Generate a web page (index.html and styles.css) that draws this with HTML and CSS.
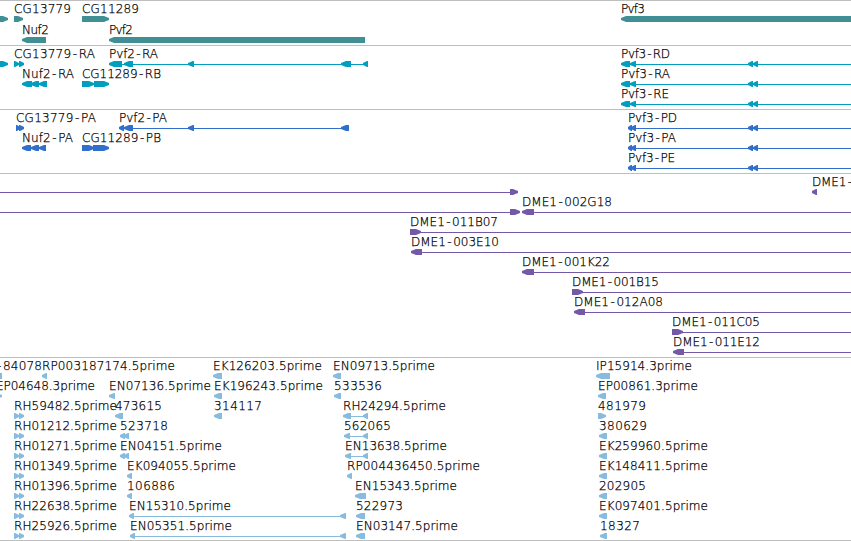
FILE: index.html
```html
<!DOCTYPE html>
<html lang="en">
<head>
  <meta charset="UTF-8">
  <meta name="viewport" content="width=device-width, initial-scale=1.0">
  <title>Genome Browser</title>
  <link rel="stylesheet" href="styles.css">
</head>
<body>
  <main class="tracks">
    <svg class="track genes" id="genes"></svg>
    <svg class="track transcripts" id="transcripts"></svg>
    <svg class="track proteins" id="proteins"></svg>
    <svg class="track clones" id="clones"></svg>
    <svg class="track insertions" id="insertions"></svg>
  </main>
  <script src="script.js"></script>
</body>
</html>
```

FILE: styles.css
```css
body {
  margin: 0;
  background: #fff;
  overflow: hidden;
}
.tracks {
  display: flex;
  flex-direction: column;
  border-bottom: 1px solid #bebebe;
}
.track {
  display: block;
  width: 100%;
  box-sizing: border-box;
  border-top: 1px solid #bebebe;
  overflow: hidden;
}
.track text {
  font-family: "DejaVu Sans", sans-serif;
  font-size: 12px;
  font-weight: 200;
  fill: #000;
  stroke: #000;
  stroke-width: 0.25px;
}
.genes {
  height: 45px;
  color: #3f8f94;
}
.transcripts {
  height: 64px;
  color: #009fc0;
}
.proteins {
  height: 64px;
  color: #306fcc;
}
.clones {
  height: 184px;
  color: #7559a9;
}
.insertions {
  height: 183px;
  color: #87bcde;
}
.feature polygon,
.feature rect {
  fill: currentColor;
}
```

FILE: script.js
```js
// Each feature: [row, strand, label, label start, label end, blocks, connector]
const tracks = {
  genes: [
    [0, '+', '', 0, 0, [[-10, 8]]],
    [0, '+', 'CG13779', 14, 71, [[14, 23]]],
    [0, '+', 'CG11289', 82, 139, [[82, 109]]],
    [0, '-', 'Pvf3', 621, 645, [[621, 900]]],
    [1, '-', 'Nuf2', 22, 49, [[22, 46]]],
    [1, '-', 'Pvf2', 109, 133, [[109, 365]]]
  ],
  transcripts: [
    [0, '+', '', 0, 0, [[-10, 8]]],
    [0, '+', 'CG13779-RA', 14, 95, [[14, 19], [19, 24]]],
    [0, '-', 'Pvf2-RA', 109, 158, [[109, 122], [124, 133], [188, 194], [341, 351], [363, 368]], [109, 368]],
    [0, '-', 'Pvf3-RD', 621, 670, [[621, 630], [630, 636], [748, 753], [753, 758]], [621, 900]],
    [1, '-', 'Nuf2-RA', 22, 74, [[22, 32], [31, 39], [39, 47]]],
    [1, '+', 'CG11289-RB', 82, 161, [[82, 94], [94, 109]]],
    [1, '-', 'Pvf3-RA', 621, 670, [[621, 630], [630, 636], [748, 753], [753, 758]], [621, 900]],
    [2, '-', 'Pvf3-RE', 621, 669, [[621, 630], [630, 636], [748, 753], [753, 758]], [621, 900]]
  ],
  proteins: [
    [0, '+', 'CG13779-PA', 16, 96, [[16, 20], [19, 24]]],
    [0, '-', 'Pvf2-PA', 119, 167, [[119, 124], [124, 133], [188, 194], [341, 349]], [119, 349]],
    [0, '-', 'Pvf3-PD', 628, 677, [[628, 632], [631, 636], [748, 753], [753, 758]], [628, 900]],
    [1, '-', 'Nuf2-PA', 22, 73, [[22, 31], [31, 39], [39, 46]]],
    [1, '+', 'CG11289-PB', 82, 161, [[82, 94], [93, 109]]],
    [1, '-', 'Pvf3-PA', 628, 676, [[628, 632], [631, 636], [748, 753], [753, 758]], [628, 900]],
    [2, '-', 'Pvf3-PE', 628, 675, [[628, 632], [631, 636], [748, 753], [753, 758]], [628, 900]]
  ],
  clones: [
    [0, '+', '', 0, 0, [[510, 518]], [0, 518]],
    [0, '-', 'DME1-', 812, 852, [[812, 817]]],
    [1, '+', '', 0, 0, [[510, 520]], [0, 520]],
    [1, '-', 'DME1-002G18', 522, 612, [[522, 534]], [522, 900]],
    [2, '+', 'DME1-011B07', 410, 498, [[410, 421]], [410, 900]],
    [3, '-', 'DME1-003E10', 411, 499, [[411, 422]], [411, 900]],
    [4, '-', 'DME1-001K22', 522, 610, [[522, 534]], [522, 900]],
    [5, '+', 'DME1-001B15', 572, 659, [[572, 583]], [572, 900]],
    [6, '-', 'DME1-012A08', 574, 663, [[574, 585]], [574, 900]],
    [7, '+', 'DME1-011C05', 672, 760, [[672, 683]], [672, 900]],
    [8, '-', 'DME1-011E12', 673, 760, [[673, 684]], [673, 900]]
  ],
  insertions: [
    [0, '-', '-84078', -3, 42, [[-5, 2]]],
    [0, '-', 'RP003187174.5prime', 42, 175, [[42, 47]]],
    [0, '-', 'EK126203.5prime', 213, 322, [[213, 222]]],
    [0, '-', 'EN09713.5prime', 333, 435, [[333, 341]]],
    [0, '-', 'IP15914.3prime', 596, 692, [[596, 610]]],
    [1, '+', 'EP04648.3prime', -4, 95, [[-4, 2]]],
    [1, '-', 'EN07136.5prime', 109, 211, [[109, 115]]],
    [1, '-', 'EK196243.5prime', 214, 323, [[214, 222]]],
    [1, '-', '533536', 334, 382, [[334, 341]]],
    [1, '-', 'EP00861.3prime', 598, 698, [[598, 606]]],
    [2, '+', 'RH59482.5prime', 14, 117, [[14, 19], [19, 24]]],
    [2, '-', '473615', 115, 162, [[115, 123]]],
    [2, '-', '314117', 214, 262, [[214, 222]]],
    [2, '-', 'RH24294.5prime', 343, 446, [[343, 351], [363, 368]], [343, 368]],
    [2, '+', '481979', 598, 646, [[598, 606]]],
    [3, '+', 'RH01212.5prime', 14, 117, [[14, 19], [19, 24]]],
    [3, '-', '523718', 120, 168, [[120, 125], [124, 129]]],
    [3, '-', '562065', 344, 391, [[344, 350], [363, 368]], [344, 368]],
    [3, '-', '380629', 599, 647, [[599, 607]]],
    [4, '+', 'RH01271.5prime', 14, 117, [[14, 19], [19, 24]]],
    [4, '-', 'EN04151.5prime', 120, 222, [[120, 125], [124, 129]]],
    [4, '-', 'EN13638.5prime', 345, 447, [[345, 351], [363, 368]], [345, 368]],
    [4, '-', 'EK259960.5prime', 599, 708, [[599, 607]]],
    [5, '+', 'RH01349.5prime', 14, 117, [[14, 19], [19, 24]]],
    [5, '-', 'EK094055.5prime', 127, 236, [[127, 132]]],
    [5, '-', 'RP004436450.5prime', 347, 480, [[347, 352]]],
    [5, '-', 'EK148411.5prime', 599, 708, [[599, 607]]],
    [6, '+', 'RH01396.5prime', 14, 117, [[14, 19], [19, 24]]],
    [6, '-', '106886', 127, 175, [[127, 132]]],
    [6, '-', 'EN15343.5prime', 355, 457, [[355, 366]]],
    [6, '-', '202905', 599, 646, [[599, 607]]],
    [7, '+', 'RH22638.5prime', 14, 117, [[14, 19], [19, 24]]],
    [7, '-', 'EN15310.5prime', 129, 231, [[129, 134], [340, 346]], [129, 346]],
    [7, '-', '522973', 356, 403, [[356, 365]]],
    [7, '-', 'EK097401.5prime', 599, 708, [[599, 607]]],
    [8, '+', 'RH25926.5prime', 14, 117, [[14, 19], [19, 24]]],
    [8, '-', 'EN05351.5prime', 130, 232, [[130, 135], [340, 346]], [130, 346]],
    [8, '-', 'EN03147.5prime', 356, 458, [[356, 365]]],
    [8, '-', '18327', 600, 640, [[600, 607]]]
  ]
};

function addNode(parent, name, attrs) {
  const node = document.createElementNS('http://www.w3.org/2000/svg', name);
  for (const key in attrs) {
    node.setAttribute(key, attrs[key]);
  }
  parent.appendChild(node);
  return node;
}

// A block is a bar with its blunt pointed end on the strand side
function arrow(start, end, top, strand) {
  const tip = Math.min(6, end - start);
  const bottom = top + 6;
  if (strand === '+') {
    return `${start},${top} ${end - tip + 1},${top} ${end},${top + 2} ${end},${top + 4} ${end - tip + 1},${bottom} ${start},${bottom}`;
  }
  return `${end},${top} ${start + tip - 1},${top} ${start},${top + 2} ${start},${top + 4} ${start + tip - 1},${bottom} ${end},${bottom}`;
}

// Extra room on both sides of a hyphen
function spacing(label) {
  return label.split('').map((c, i) => (c === '-' && i > 0) || label[i - 1] === '-' ? 1.5 : 0).join(' ');
}

for (const id in tracks) {
  const svg = document.getElementById(id);
  const rowHeight = id === 'genes' ? 21 : 20;

  tracks[id].forEach(([row, strand, label, x, labelEnd, blocks, connector]) => {
    const top = row * rowHeight;
    const feature = addNode(svg, 'g', { class: 'feature' });
    if (connector) {
      addNode(feature, 'rect', { x: connector[0], y: top + 18, width: connector[1] - connector[0], height: 1 });
    }
    blocks.forEach(([start, end]) => {
      addNode(feature, 'polygon', { points: arrow(start, end, top + 15, strand) });
    });
    if (label) {
      addNode(feature, 'text', { x: x, y: top + 12, dx: spacing(label), textLength: labelEnd - x }).textContent = label;
    }
  });
}
```
